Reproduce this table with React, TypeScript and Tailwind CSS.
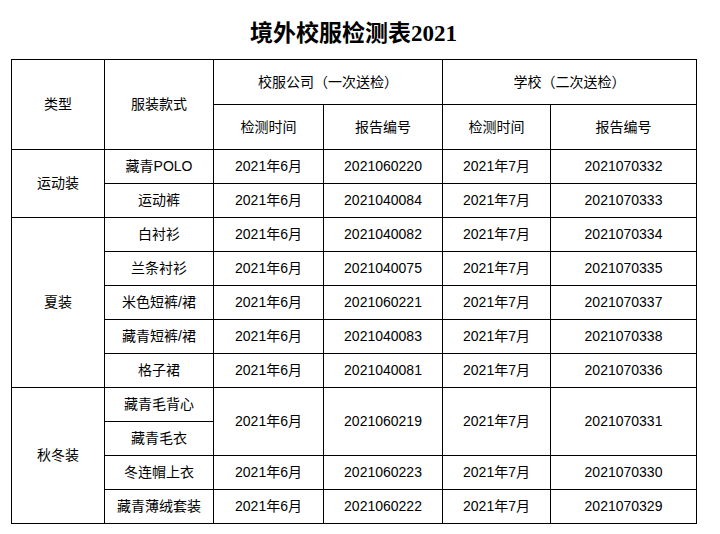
const rows = [
  { type: '运动装', span: 2, name: '藏青POLO', d1: '2021年6月', n1: '2021060220', d2: '2021年7月', n2: '2021070332' },
  { name: '运动裤', d1: '2021年6月', n1: '2021040084', d2: '2021年7月', n2: '2021070333' },
  { type: '夏装', span: 5, name: '白衬衫', d1: '2021年6月', n1: '2021040082', d2: '2021年7月', n2: '2021070334' },
  { name: '兰条衬衫', d1: '2021年6月', n1: '2021040075', d2: '2021年7月', n2: '2021070335' },
  { name: '米色短裤/裙', d1: '2021年6月', n1: '2021060221', d2: '2021年7月', n2: '2021070337' },
  { name: '藏青短裤/裙', d1: '2021年6月', n1: '2021040083', d2: '2021年7月', n2: '2021070338' },
  { name: '格子裙', d1: '2021年6月', n1: '2021040081', d2: '2021年7月', n2: '2021070336' },
  { type: '秋冬装', span: 4, name: '藏青毛背心', d1: '2021年6月', n1: '2021060219', d2: '2021年7月', n2: '2021070331', merge: 2 },
  { name: '藏青毛衣', skip: true },
  { name: '冬连帽上衣', d1: '2021年6月', n1: '2021060223', d2: '2021年7月', n2: '2021070330' },
  { name: '藏青薄绒套装', d1: '2021年6月', n1: '2021060222', d2: '2021年7月', n2: '2021070329' },
];

const cell = 'border border-black text-center align-middle p-0';

export default function App() {
  return (
    <div className="w-[720px] h-[534px] bg-white text-black font-['Liberation_Sans','Noto_Sans_CJK_SC',sans-serif] text-[14px]">
      <div className="h-[59px] pt-[18px] pl-[11px] w-[696px]">
        <h1 className="text-center text-[23px] leading-[32px] font-bold font-['Liberation_Serif','Noto_Sans_CJK_SC',serif]">
          境外校服检测表2021
        </h1>
      </div>
      <table className="ml-[11px] w-[685px] table-fixed border-collapse">
        <colgroup>
          <col className="w-[93px]" />
          <col className="w-[109px]" />
          <col className="w-[110px]" />
          <col className="w-[119px]" />
          <col className="w-[108px]" />
          <col className="w-[146px]" />
        </colgroup>
        <thead>
          <tr className="h-[45px]">
            <th rowSpan={2} className={`${cell} font-normal`}>类型</th>
            <th rowSpan={2} className={`${cell} font-normal`}>服装款式</th>
            <th colSpan={2} className={`${cell} font-normal`}>校服公司（一次送检）</th>
            <th colSpan={2} className={`${cell} font-normal`}>学校（二次送检）</th>
          </tr>
          <tr className="h-[45px]">
            <th className={`${cell} font-normal`}>检测时间</th>
            <th className={`${cell} font-normal`}>报告编号</th>
            <th className={`${cell} font-normal`}>检测时间</th>
            <th className={`${cell} font-normal`}>报告编号</th>
          </tr>
        </thead>
        <tbody>
          {rows.map((r, i) => (
            <tr key={i} className="h-[34px]">
              {r.type && <td rowSpan={r.span} className={cell}>{r.type}</td>}
              <td className={cell}>{r.name}</td>
              {!r.skip && (
                <>
                  <td rowSpan={r.merge} className={cell}>{r.d1}</td>
                  <td rowSpan={r.merge} className={cell}>{r.n1}</td>
                  <td rowSpan={r.merge} className={cell}>{r.d2}</td>
                  <td rowSpan={r.merge} className={cell}>{r.n2}</td>
                </>
              )}
            </tr>
          ))}
        </tbody>
      </table>
    </div>
  );
}
